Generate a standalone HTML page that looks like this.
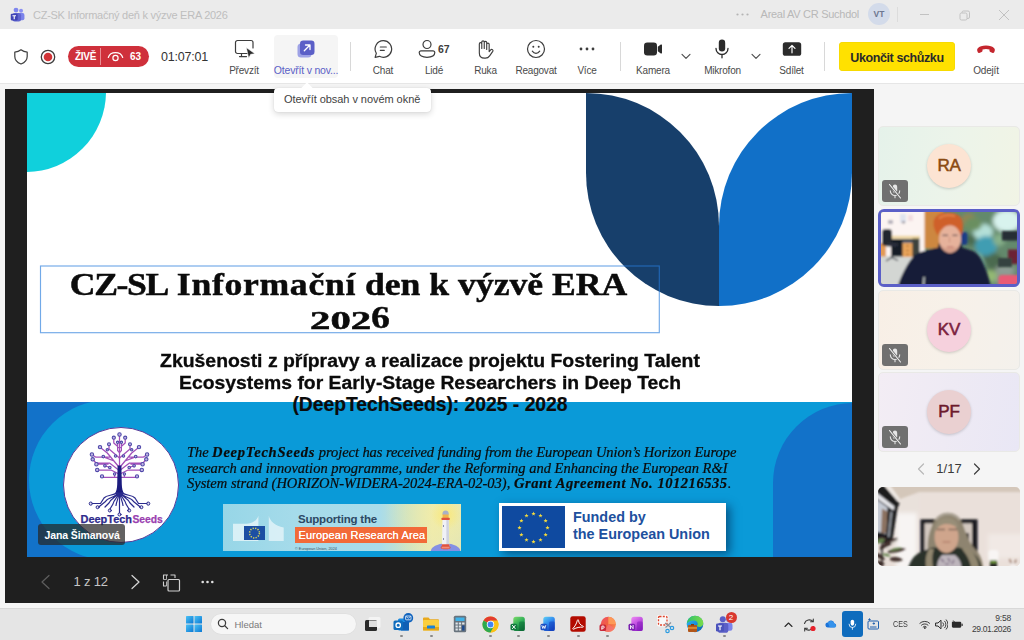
<!DOCTYPE html>
<html lang="cs">
<head>
<meta charset="utf-8">
<title>CZ-SK Informačný deň k výzve ERA 2026</title>
<style>
*{box-sizing:border-box;margin:0;padding:0}
html,body{width:1024px;height:640px;overflow:hidden;background:#f5f5f5;font-family:"Liberation Sans",sans-serif;}
.abs{position:absolute}
#root{position:absolute;left:0;top:0;width:1024px;height:640px;overflow:hidden;background:#f5f5f5}
/* title bar */
#titlebar{left:0;top:0;width:1024px;height:29px;background:#ebebeb}
#titlebar .ttl{left:33px;top:8px;font-size:11px;color:#bebebe;white-space:nowrap;letter-spacing:-0.26px;line-height:14px}
#titlebar .org{right:165px;top:7px;font-size:11px;color:#b8b8b8;white-space:nowrap;line-height:14px;letter-spacing:-0.28px}
#titlebar .dots{left:736px;top:13px;width:13px;height:3px}
#titlebar .av{left:868px;top:3px;width:22px;height:22px;border-radius:50%;background:#d3dbea;color:#6e7790;font-size:8.5px;font-weight:bold;text-align:center;line-height:22px}
/* toolbar */
#toolbar{left:0;top:29px;width:1024px;height:55px;background:#fff;border-bottom:1px solid #e6e6e6}
.tb{position:absolute;top:40px;transform:translateX(-50%);text-align:center;white-space:nowrap}
.tb svg{display:block;margin:0 auto}
.lbl{position:absolute;top:64.500px;transform:translateX(-50%);font-size:10px;color:#4a4a4a;white-space:nowrap;letter-spacing:-0.2px;line-height:12px}
.vdiv{position:absolute;top:42px;width:1px;height:29px;background:#d8d8d8}
/* stage */
#stage{left:5px;top:89px;width:869px;height:514px;background:#1f1f1f}
#slide{left:27px;top:93px;width:825px;height:464px;background:#fff;overflow:hidden}
/* right panel */
.tile{position:absolute;left:878px;width:142px;height:79.500px;border-radius:5px;border:1px solid #e9e9e6}
.avc{position:absolute;left:48px;top:16.500px;width:44px;height:44px;border-radius:50%;text-align:center;line-height:44px;font-size:17px;font-weight:normal;-webkit-text-stroke:.55px currentColor;box-shadow:0 1px 3px rgba(0,0,0,.18);letter-spacing:-0.2px}
.mute{position:absolute;left:3px;top:52.600px;width:25.500px;height:22px;border-radius:3px;background:#707070}
/* taskbar */
#taskbar{left:0;top:608px;width:1024px;height:32px;background:#e5e5e5;border-top:1px solid #d8d8d8}
</style>
</head>
<body>
<div id="root">

<!-- TITLE BAR -->
<div id="titlebar" class="abs">
  <svg class="abs" style="left:10px;top:6.500px" width="15" height="15.500" viewBox="0 0 16 16">
    <circle cx="11.800" cy="3.700" r="2.100" fill="#8a8ff2"/><circle cx="6.400" cy="3" r="2.600" fill="#7f86ee"/>
    <rect x="9" y="6.200" width="6.400" height="7.600" rx="2" fill="#7b83eb"/>
    <rect x="2.600" y="6.200" width="9.200" height="9" rx="2.400" fill="#5f64d0"/>
    <rect x="0.800" y="6.800" width="7.400" height="7.200" rx="1.100" fill="#3f43b4"/>
    <path d="M2.600 8.500h3.800v1H5.100v3.300H3.900V9.500H2.600z" fill="#fff"/>
  </svg>
  <div class="abs ttl">CZ-SK Informačný deň k výzve ERA 2026</div>
  <svg class="abs dots" viewBox="0 0 13 3"><circle cx="1.500" cy="1.500" r="1.100" fill="#b4b4b4"/><circle cx="6.500" cy="1.500" r="1.100" fill="#b4b4b4"/><circle cx="11.500" cy="1.500" r="1.100" fill="#b4b4b4"/></svg>
  <div class="abs org">Areal AV CR Suchdol</div>
  <div class="abs av">VT</div>
  <div class="abs" style="left:897px;top:7px;width:1px;height:15px;background:#dcdcdc"></div>
  <svg class="abs" style="left:915px;top:5px" width="100" height="20" viewBox="0 0 100 20" fill="none" stroke="#c2c2c2" stroke-width="1">
    <path d="M5 9.5h9"/>
    <rect x="45" y="8" width="7" height="7" rx="1.5"/><path d="M47 8V7.5a1.5 1.5 0 0 1 1.5-1.500H53a1.500 1.500 0 0 1 1.500 1.500V12a1.500 1.500 0 0 1-1.500 1.500H52"/>
    <path d="M84 5l10 10M94 5L84 15"/>
  </svg>
</div>

<!-- TOOLBAR -->
<div id="toolbar" class="abs"></div>
<div id="tbitems">
  <!-- shield -->
  <svg class="abs" style="left:12px;top:48px" width="18" height="18" viewBox="0 0 18 18" fill="none" stroke="#3d3d3d" stroke-width="1.2" stroke-linejoin="round"><path d="M9 1.800c1.900 1.500 3.900 2.200 6.200 2.300v4.300c0 3.600-2.300 6-6.200 7.600-3.900-1.600-6.200-4-6.200-7.600V4.100C5.100 4 7.100 3.300 9 1.800z"/></svg>
  <!-- record -->
  <svg class="abs" style="left:39px;top:48px" width="18" height="18" viewBox="0 0 18 18"><circle cx="9" cy="9" r="6.700" fill="none" stroke="#3d3d3d" stroke-width="1.300"/><circle cx="9" cy="9" r="4.300" fill="#d13438"/></svg>
  <!-- live badge -->
  <div class="abs" style="left:68px;top:46px;width:81px;height:21px;border-radius:10.500px;background:#cf303b"></div>
  <div class="abs" style="left:75px;top:51px;font-size:10px;font-weight:bold;color:#fff;letter-spacing:-0.300px;line-height:12px">ŽIVĚ</div>
  <div class="abs" style="left:100px;top:48px;width:1px;height:17px;background:#e98d93"></div>
  <svg class="abs" style="left:107px;top:50px" width="17" height="13" viewBox="0 0 17 13" fill="none" stroke="#fff" stroke-width="1.200" stroke-linecap="round"><path d="M1.300 7.500C2.300 4.300 5 2.600 8.500 2.600s6.200 1.700 7.200 4.900"/><circle cx="8.500" cy="8" r="2.600"/></svg>
  <div class="abs" style="left:130px;top:51px;font-size:10px;font-weight:bold;color:#fff;line-height:12px">63</div>
  <div class="abs" style="left:161px;top:50px;font-size:12.500px;color:#333;line-height:15px;letter-spacing:-0.200px">01:07:01</div>

  <!-- Prevzit -->
  <svg class="abs" style="left:234px;top:39px" width="22" height="20" viewBox="0 0 22 20" fill="none" stroke="#3d3d3d" stroke-width="1.200"><path d="M14 14.500H3.500a2 2 0 0 1-2-2v-9a2 2 0 0 1 2-2h13.500a2 2 0 0 1 2 2v5.500" stroke-linecap="round"/><path d="M7.500 14.500v3M5.500 17.600h7" stroke-linecap="round"/><path d="M12.300 8.600l8.700 6.200-4.300.5-2 3.900z" fill="#2b2b2b" stroke="#fff" stroke-width=".6"/></svg>
  <div class="lbl" style="left:244px">Převzít</div>

  <!-- Otevrit -->
  <div class="abs" style="left:274px;top:35px;width:64px;height:43px;border-radius:4px;background:#f5f5f5"></div>
  <svg class="abs" style="left:296px;top:39px" width="20" height="20" viewBox="0 0 20 20"><rect x="1.500" y="4.500" width="14" height="14" rx="3.500" fill="#9ea2e6"/><rect x="4" y="1.500" width="14.500" height="14.500" rx="3.200" fill="#5b5fc7"/><path d="M8.300 11.700l5.400-5.400M9.500 6h4.500v4.500" fill="none" stroke="#fff" stroke-width="1.300" stroke-linecap="round" stroke-linejoin="round"/></svg>
  <div class="lbl" style="left:306px;top:64px;color:#5b5fc7;font-size:10.500px">Otevřít v nov...</div>
  <div class="vdiv" style="left:350px"></div>

  <!-- Chat -->
  <svg class="abs" style="left:373px;top:39px" width="20" height="20" viewBox="0 0 20 20" fill="none" stroke="#3d3d3d" stroke-width="1.200" stroke-linecap="round" stroke-linejoin="round"><path d="M10.300 1.700a8.300 8.300 0 1 1-3.900 15.600l-4.300 1.100 1.200-4.100A8.300 8.300 0 0 1 10.300 1.700z"/><path d="M7.300 8h6M7.300 11.300h4"/></svg>
  <div class="lbl" style="left:383px">Chat</div>

  <!-- Lide -->
  <svg class="abs" style="left:418px;top:39px" width="18" height="20" viewBox="0 0 18 20" fill="none" stroke="#3d3d3d" stroke-width="1.200"><circle cx="9" cy="5.500" r="4"/><path d="M3 11.800h12a1.800 1.800 0 0 1 1.800 1.800c0 3-3 4.700-7.800 4.700s-7.800-1.700-7.800-4.700A1.800 1.800 0 0 1 3 11.800z"/></svg>
  <div class="abs" style="left:438px;top:43px;font-size:10.500px;font-weight:bold;color:#3d3d3d;line-height:12px">67</div>
  <div class="lbl" style="left:434px">Lidé</div>

  <!-- Ruka -->
  <svg class="abs" style="left:476px;top:39px" width="18" height="20.800" viewBox="0 0 19 22" fill="none" stroke="#3d3d3d" stroke-width="1.200" stroke-linecap="round" stroke-linejoin="round"><path d="M3.500 12V5.200a1.300 1.300 0 0 1 2.600 0V10M6.100 10V3.300a1.300 1.300 0 0 1 2.600 0V10M8.700 10V3.800a1.300 1.300 0 0 1 2.600 0V10.500M11.300 11V5.600a1.300 1.300 0 0 1 2.600 0v7.700l1.600-1.900a1.400 1.400 0 0 1 2.200 1.700l-3.300 4.800c-1 1.500-2.400 2.400-4.500 2.400H9c-3.300 0-5.500-2.300-5.500-5.500V12"/></svg>
  <div class="lbl" style="left:485.500px">Ruka</div>

  <!-- Reagovat -->
  <svg class="abs" style="left:526px;top:39px" width="20" height="20" viewBox="0 0 20 20" fill="none" stroke="#3d3d3d" stroke-width="1.200" stroke-linecap="round"><circle cx="10" cy="10" r="8.500"/><path d="M6.300 12.200c1 1.500 2.300 2.200 3.700 2.200s2.700-.7 3.700-2.200"/><circle cx="7.300" cy="7.700" r="1" fill="#3d3d3d" stroke="none"/><circle cx="12.700" cy="7.700" r="1" fill="#3d3d3d" stroke="none"/></svg>
  <div class="lbl" style="left:536px">Reagovat</div>

  <!-- Vice -->
  <svg class="abs" style="left:578px;top:46px" width="18" height="6" viewBox="0 0 18 6"><circle cx="3" cy="3" r="1.400" fill="#3d3d3d"/><circle cx="9" cy="3" r="1.400" fill="#3d3d3d"/><circle cx="15" cy="3" r="1.400" fill="#3d3d3d"/></svg>
  <div class="lbl" style="left:587px">Více</div>
  <div class="vdiv" style="left:620px"></div>

  <!-- Kamera -->
  <svg class="abs" style="left:643px;top:41px" width="20" height="16" viewBox="0 0 20 16"><rect x="1" y="1.500" width="13" height="13" rx="3.300" fill="#2b2b2b"/><path d="M14.800 5.800l3-2.200a.8.800 0 0 1 1.200.7v7.400a.8.800 0 0 1-1.200.7l-3-2.200z" fill="#2b2b2b"/></svg>
  <div class="lbl" style="left:653px">Kamera</div>
  <svg class="abs" style="left:681px;top:53px" width="10" height="7" viewBox="0 0 10 7" fill="none" stroke="#4a4a4a" stroke-width="1.100" stroke-linecap="round" stroke-linejoin="round"><path d="M1 1.300l4 4 4-4"/></svg>

  <!-- Mikrofon -->
  <svg class="abs" style="left:714px;top:38px" width="16" height="22" viewBox="0 0 16 22"><rect x="4.800" y="1.500" width="6.400" height="12" rx="3.200" fill="#2b2b2b"/><path d="M2 10.500a6 6 0 0 0 12 0M8 16.500v3.300" fill="none" stroke="#2b2b2b" stroke-width="1.300" stroke-linecap="round"/></svg>
  <div class="lbl" style="left:722.500px">Mikrofon</div>
  <svg class="abs" style="left:750.500px;top:53px" width="10" height="7" viewBox="0 0 10 7" fill="none" stroke="#4a4a4a" stroke-width="1.100" stroke-linecap="round" stroke-linejoin="round"><path d="M1 1.300l4 4 4-4"/></svg>

  <!-- Sdilet -->
  <svg class="abs" style="left:782px;top:41px" width="20" height="16" viewBox="0 0 20 16"><rect x="0.800" y="1.200" width="18.400" height="13.600" rx="2.600" fill="#2b2b2b"/><path d="M10 11.800V4.600M7 7.400l3-3 3 3" fill="none" stroke="#fff" stroke-width="1.200" stroke-linecap="round" stroke-linejoin="round"/></svg>
  <div class="lbl" style="left:791.500px">Sdílet</div>
  <div class="vdiv" style="left:824px"></div>

  <!-- End meeting -->
  <div class="abs" style="left:839px;top:42px;width:116px;height:28.500px;border-radius:4px;background:#ffe100;box-shadow:0 0 0 .5px #f0d400 inset"></div>
  <div class="abs" id="endtxt" style="left:839px;top:50.500px;width:116px;text-align:center;font-size:12.500px;font-weight:bold;color:#2a2a2a;line-height:15px;letter-spacing:-0.400px">Ukončit schůzku</div>

  <!-- Leave -->
  <svg class="abs" style="left:976px;top:44px" width="20" height="11" viewBox="0 0 20 11"><path d="M10 1.500c-3.800 0-6.700 1.100-8.200 2.700-.8.900-.8 2.300-.3 3.400l.3.700c.3.600.9.800 1.500.6l2.300-.8c.6-.2.900-.7.900-1.300V5.600c1.100-.4 2.300-.6 3.500-.6s2.400.2 3.500.6v1.200c0 .6.300 1.100.9 1.300l2.300.8c.6.200 1.200 0 1.500-.6l.3-.7c.5-1.100.5-2.500-.3-3.400C16.700 2.600 13.800 1.500 10 1.500z" fill="#c4262e"/></svg>
  <div class="lbl" style="left:986px">Odejít</div>

  <!-- tooltip -->
  <div class="abs" style="left:274px;top:87.500px;width:156.500px;height:24.500px;border-radius:4px;background:#fff;box-shadow:0 2px 6px rgba(0,0,0,.16),0 0 1px rgba(0,0,0,.18);z-index:20"></div>
  <div class="abs" style="left:303px;top:84px;width:8px;height:8px;background:#fff;transform:rotate(45deg);z-index:21"></div>
  <div class="abs" id="tiptxt" style="left:284px;top:93px;font-size:11px;color:#424242;line-height:13px;z-index:22;white-space:nowrap;letter-spacing:-0.050px">Otevřít obsah v novém okně</div>
</div>

<!-- STAGE -->
<div id="stage" class="abs"></div>
<div id="slide" class="abs">
  <!-- top-left cyan circle -->
  <div class="abs" style="left:-81px;top:-81px;width:160px;height:160px;border-radius:50%;background:#10d0dc"></div>
  <!-- leaves -->
  <svg class="abs" style="left:559px;top:0" width="266" height="214" viewBox="0 0 266 214">
    <path d="M0 0A133 133 0 0 1 133 133V213A133 133 0 0 1 0 80Z" fill="#173f6b"/>
    <path d="M266 0A133 133 0 0 0 133 133V213A133 133 0 0 0 266 80Z" fill="#1170c8"/>
  </svg>
  <!-- title -->
  <svg class="abs" style="left:0;top:160px" width="700" height="100" viewBox="0 0 700 100"><rect x="13.500" y="13" width="618.800" height="66.700" fill="none" stroke="rgba(40,125,220,.66)" stroke-width="1.150"/></svg>
  <div class="abs" id="t1" style="left:11.500px;top:174px;width:619px;text-align:center;font-family:'Liberation Serif',serif;font-weight:bold;font-size:31px;line-height:36px;color:#0b0b0b;-webkit-text-stroke:.45px #0b0b0b;white-space:nowrap;transform:scaleX(1.150);transform-origin:309px 0"><span style="letter-spacing:-1.200px">CZ-SL</span> <span style="letter-spacing:.6px">Informační</span> den k výzvě ERA</div>
  <div class="abs" id="t2a" style="left:283px;top:213px;font-family:'Liberation Serif',serif;font-weight:bold;font-size:25px;line-height:30px;color:#0b0b0b;-webkit-text-stroke:.5px #0b0b0b;transform:scaleX(1.630);transform-origin:0 0;white-space:nowrap">202</div>
  <div class="abs" id="t2b" style="left:344px;top:206.500px;font-family:'Liberation Serif',serif;font-weight:bold;font-size:31px;line-height:36px;color:#0b0b0b;-webkit-text-stroke:.4px #0b0b0b;transform:scaleX(1.220);transform-origin:0 0;white-space:nowrap">6</div>
  <!-- subtitle -->
  <div class="abs" id="s1" style="-webkit-text-stroke:.3px #0b0b0b;left:0;top:257px;width:806px;text-align:center;font-weight:bold;font-size:18px;line-height:22.300px;color:#0b0b0b;white-space:nowrap;transform:scaleX(1.078);transform-origin:403px 0">Zkušenosti z přípravy a realizace projektu Fostering Talent</div>
  <div class="abs" id="s2" style="-webkit-text-stroke:.3px #0b0b0b;left:0;top:279.300px;width:806px;text-align:center;font-weight:bold;font-size:18px;line-height:22.300px;color:#0b0b0b;white-space:nowrap;transform:scaleX(1.075);transform-origin:403px 0">Ecosystems for Early-Stage Researchers in Deep Tech</div>
  <!-- blue band -->
  <div class="abs" id="band" style="left:0;top:309px;width:825px;height:155px;background:#1272c9;overflow:hidden">
    <div class="abs" style="left:2px;top:-2px;width:900px;height:160px;border-radius:80px;background:#0a9ad8"></div>
    <div class="abs" style="left:746px;top:1px;width:160px;height:200px;border-top-left-radius:80px;background:#1272c9"></div>
  </div>
  <div class="abs" id="s3" style="-webkit-text-stroke:.2px #0b0b0b;left:0;top:301px;width:806px;text-align:center;font-weight:bold;font-size:19.300px;line-height:22.300px;color:#0b0b0b;white-space:nowrap">(DeepTechSeeds): 2025 - 2028</div>
  <!-- logo -->
  <div class="abs" style="left:35.500px;top:334px;width:116px;height:116px;border-radius:50%;background:#fff;border:1px solid #5a3d9a"></div>
  <svg class="abs" id="tree" style="left:35.500px;top:334px" width="118" height="118" viewBox="0 0 118 118" fill="none" stroke-linecap="round" stroke-linejoin="round">
    <g stroke="#a24fba" stroke-width="1.250">
      <path d="M56.500 40V9"/>
      <path d="M56.500 21L50.800 16V12.300M56.500 25.500L54.600 23.500V16.800M56.500 31L46 22V18.800M55.500 39.500L44.300 26 38 21M51 34L40.500 29.800M46.500 30H32.500L29.500 28M55 42.500L46.500 36H33L30.300 33M45 37.200H35M55 46.500L48 43H35.800M47 40.500L42 38.800M55 50.300H40.500M51.600 47.200V50"/>
      <g transform="matrix(-1 0 0 1 113 0)"><path d="M56.500 21L50.800 16V12.300M56.500 25.500L54.600 23.500V16.800M56.500 31L46 22V18.800M55.500 39.500L44.300 26 38 21M51 34L40.500 29.800M46.500 30H32.500L29.500 28M55 42.500L46.500 36H33L30.300 33M45 37.200H35M55 46.500L48 43H35.800M47 40.500L42 38.800M55 50.300H40.500M51.600 47.200V50"/></g>
    </g>
    <g fill="#bfb4e2" stroke="#4d47a8" stroke-width="1.050">
      <circle cx="56.500" cy="7.500" r="1.700"/>
      <circle cx="50.800" cy="10.700" r="1.600"/><circle cx="54.600" cy="15.300" r="1.200"/><circle cx="46" cy="17.200" r="1.500"/><circle cx="37" cy="20.100" r="1.700"/><circle cx="44.300" cy="22.800" r="1.200"/><circle cx="28.900" cy="27.500" r="1.700"/><circle cx="40.300" cy="29.600" r="1.300"/><circle cx="52.500" cy="29" r="1.200"/><circle cx="29.700" cy="32.300" r="1.700"/><circle cx="33.400" cy="37.200" r="1.700"/><circle cx="41.900" cy="38.800" r="1.300"/><circle cx="46.800" cy="40.500" r="1.300"/><circle cx="34.200" cy="42.900" r="1.700"/><circle cx="51.600" cy="47" r="1.200"/><circle cx="39" cy="49.400" r="1.600"/>
      <g transform="matrix(-1 0 0 1 113 0)"><circle cx="50.800" cy="10.700" r="1.600"/><circle cx="54.600" cy="15.300" r="1.200"/><circle cx="46" cy="17.200" r="1.500"/><circle cx="37" cy="20.100" r="1.700"/><circle cx="44.300" cy="22.800" r="1.200"/><circle cx="28.900" cy="27.500" r="1.700"/><circle cx="40.300" cy="29.600" r="1.300"/><circle cx="52.500" cy="29" r="1.200"/><circle cx="29.700" cy="32.300" r="1.700"/><circle cx="33.400" cy="37.200" r="1.700"/><circle cx="41.900" cy="38.800" r="1.300"/><circle cx="46.800" cy="40.500" r="1.300"/><circle cx="34.200" cy="42.900" r="1.700"/><circle cx="51.600" cy="47" r="1.200"/><circle cx="39" cy="49.400" r="1.600"/></g>
    </g>
    <path d="M54.600 38.500h3.800l.4 19c.1 4 .9 6.500 2.200 9.500H52c1.300-3 2.100-5.500 2.200-9.500z" fill="#1b1b7e" stroke="none"/>
    <g stroke="#2a2a8c" stroke-width="1.200">
      <path d="M56.500 66V86"/>
      <path d="M55.300 66C54.500 72 51 72 50 77L47 82M54.500 66C52.500 71 45 70 42.500 74.500L36 79.800M54 65.500C50 69 44 67.500 41 71L37.500 76.500H29.500M55 66C53 71 48 71 46 76L42 80M55.800 66.500C55.500 72 53.500 74 53 78.500"/>
      <g transform="matrix(-1 0 0 1 113 0)"><path d="M55.300 66C54.500 72 51 72 50 77L47 82M54.500 66C52.500 71 45 70 42.500 74.500L36 79.800M54 65.500C50 69 44 67.500 41 71L37.500 76.500H29.500M55 66C53 71 48 71 46 76L42 80M55.800 66.500C55.500 72 53.500 74 53 78.500"/></g>
    </g>
    <g fill="#e4e0f4" stroke="#2a2a8c" stroke-width="1">
      <circle cx="56.500" cy="87.500" r="1.500"/>
      <circle cx="46.800" cy="83.500" r="1.500"/><circle cx="34.600" cy="80.200" r="1.500"/><circle cx="27.800" cy="76.600" r="1.600"/>
      <g transform="matrix(-1 0 0 1 113 0)"><circle cx="46.800" cy="83.500" r="1.500"/><circle cx="34.600" cy="80.200" r="1.500"/><circle cx="27.800" cy="76.600" r="1.600"/></g>
    </g>
    <text x="17.500" y="96.200" font-family="Liberation Sans, sans-serif" font-weight="bold" font-size="10.500" fill="#2e2a8c" stroke="#2e2a8c" stroke-width=".25" textLength="51.500" lengthAdjust="spacingAndGlyphs">DeepTech</text>
    <text x="69.500" y="96.200" font-family="Liberation Sans, sans-serif" font-weight="bold" font-size="10.500" fill="#9a3fb0" stroke="#9a3fb0" stroke-width=".25" textLength="30.300" lengthAdjust="spacingAndGlyphs">Seeds</text>
  </svg>
  <!-- italic para -->
  <div class="abs" id="p1" style="left:160px;top:352px;font-family:'Liberation Serif',serif;font-style:italic;font-size:13.800px;line-height:15.500px;color:#0b0b0b;-webkit-text-stroke:.2px #0b0b0b;white-space:nowrap;transform:scaleX(1.0507);transform-origin:0 0;letter-spacing:-.06px">The <b style="letter-spacing:.75px">DeepTechSeeds</b> project has received funding from the European Union’s Horizon Europe</div>
  <div class="abs" id="p2" style="left:160px;top:367.500px;font-family:'Liberation Serif',serif;font-style:italic;font-size:13.800px;line-height:15.500px;color:#0b0b0b;-webkit-text-stroke:.2px #0b0b0b;white-space:nowrap;transform:scaleX(1.0507);transform-origin:0 0;">research and innovation programme, under the Reforming and Enhancing the European R&amp;I</div>
  <div class="abs" id="p3" style="left:160px;top:383px;font-family:'Liberation Serif',serif;font-style:italic;font-size:13.800px;line-height:15.500px;color:#0b0b0b;-webkit-text-stroke:.2px #0b0b0b;white-space:nowrap;transform:scaleX(1.0507);transform-origin:0 0;">System strand (HORIZON-WIDERA-2024-ERA-02-03), <b style="letter-spacing:.53px">Grant Agreement No. 101216535</b>.</div>
  <!-- ERA banner -->
  <div class="abs" id="era" style="left:196px;top:410.500px;width:238px;height:47px;overflow:hidden;background:linear-gradient(90deg,#97d6e7 0%,#a5dbea 30%,#a9dcea 66%,#cfe3c4 78%,#ece9b4 88%,#dfe4bc 100%)">
    <div class="abs" style="left:162px;top:-44px;width:120px;height:110px;border-radius:50%;background:radial-gradient(closest-side,rgba(246,238,160,.7),rgba(240,236,165,.35) 55%,rgba(240,236,165,0))"></div>
    <div class="abs" style="left:208px;top:-4px;width:30px;height:30px;border-radius:50%;background:radial-gradient(closest-side,rgba(250,232,120,.9),rgba(250,232,120,0))"></div>
    <!-- building -->
    <svg class="abs" style="left:0;top:0" width="70" height="47" viewBox="0 0 70 47"><path d="M10 37V19.700H24C30 19.500 34 16 35.400 11.700V37z" fill="#fff" opacity=".62"/><path d="M45.800 11.700C47 17 52 22 60.700 23.500V37H45.800z" fill="#fff" opacity=".58"/></svg>
    <!-- flag -->
    <div class="abs" style="left:21px;top:22.200px;width:21.100px;height:14px;background:#1c4fa3"></div>
    <svg class="abs" style="left:21px;top:22.200px" width="21.100" height="14" viewBox="0 0 21.100 14"><circle cx="10.500" cy="7" r="4.900" fill="none" stroke="#cfd060" stroke-width="1.500" stroke-dasharray="1.300 1.266"/></svg>
    <div class="abs" id="sup" style="left:75px;top:9.300px;font-size:11.500px;font-weight:bold;color:#2d4964;line-height:13px;white-space:nowrap;letter-spacing:-.2px">Supporting the</div>
    <div class="abs" style="left:72px;top:23.500px;width:131.800px;height:16.300px;background:#f26a38"></div>
    <div class="abs" id="eratxt" style="left:75.500px;top:25.600px;font-size:11px;color:#fff;line-height:12px;white-space:nowrap;letter-spacing:.15px;text-shadow:0 0 .4px #fff">European Research Area</div>
    <div class="abs" style="left:72px;top:43.500px;font-size:3.800px;color:#3a5060;line-height:4px;white-space:nowrap">© European Union, 2024</div>
    <!-- lighthouse -->
    <svg class="abs" style="left:205px;top:3px" width="34" height="45" viewBox="0 0 34 45"><ellipse cx="17.600" cy="44.500" rx="14.800" ry="8" fill="#8490e4"/><ellipse cx="17.600" cy="40.500" rx="5" ry="1.800" fill="#d94a3a"/><path d="M14 39.500L14.500 12h6.200L21.200 39.500z" fill="#f0f1f6"/><path d="M18.400 12h2.300l.5 27.500h-2.800z" fill="#cfd2e0"/><rect x="13.800" y="37.300" width="7.600" height="2.800" rx=".6" fill="#e0523e"/><rect x="13.600" y="39.800" width="8" height="1.600" rx=".6" fill="#f08a78"/><rect x="14.600" y="7" width="6" height="4.500" fill="#f2b24a"/><path d="M14.400 7.500a3.200 4 0 0 1 6.400 0z" fill="#a9b0c6"/><rect x="13.400" y="10.800" width="8.400" height="2.200" rx=".8" fill="#e0523e"/><rect x="15" y="18" width="1" height="2" fill="#8a90b0"/><rect x="15" y="31" width="1" height="2" fill="#8a90b0"/></svg>
  </div>
  <!-- funded -->
  <div class="abs" id="funded" style="left:472px;top:410px;width:227px;height:47.500px;background:#fff;box-shadow:4px 3px 9px rgba(0,30,70,.55)">
    <div class="abs" style="left:3px;top:3.300px;width:63px;height:42px;background:#0f4aa0"></div>
    <svg class="abs" style="left:3px;top:3.800px" width="63" height="42" viewBox="0 0 63 42"><g fill="#f7dc3c"><polygon points="31.50,4.55 32.03,6.07 33.64,6.10 32.36,7.08 32.82,8.62 31.50,7.70 30.18,8.62 30.64,7.08 29.36,6.10 30.97,6.07"/><polygon points="38.50,6.43 39.03,7.95 40.64,7.98 39.36,8.95 39.82,10.50 38.50,9.58 37.18,10.50 37.64,8.95 36.36,7.98 37.97,7.95"/><polygon points="43.62,11.55 44.15,13.07 45.76,13.10 44.48,14.08 44.95,15.62 43.62,14.70 42.30,15.62 42.77,14.08 41.48,13.10 43.10,13.07"/><polygon points="45.50,18.55 46.03,20.07 47.64,20.10 46.36,21.08 46.82,22.62 45.50,21.70 44.18,22.62 44.64,21.08 43.36,20.10 44.97,20.07"/><polygon points="43.62,25.55 44.15,27.07 45.76,27.10 44.48,28.08 44.95,29.62 43.62,28.70 42.30,29.62 42.77,28.08 41.48,27.10 43.10,27.07"/><polygon points="38.50,30.67 39.03,32.20 40.64,32.23 39.36,33.20 39.82,34.74 38.50,33.82 37.18,34.74 37.64,33.20 36.36,32.23 37.97,32.20"/><polygon points="31.50,32.55 32.03,34.07 33.64,34.10 32.36,35.08 32.82,36.62 31.50,35.70 30.18,36.62 30.64,35.08 29.36,34.10 30.97,34.07"/><polygon points="24.50,30.67 25.03,32.20 26.64,32.23 25.36,33.20 25.82,34.74 24.50,33.82 23.18,34.74 23.64,33.20 22.36,32.23 23.97,32.20"/><polygon points="19.38,25.55 19.90,27.07 21.52,27.10 20.23,28.08 20.70,29.62 19.38,28.70 18.05,29.62 18.52,28.08 17.24,27.10 18.85,27.07"/><polygon points="17.50,18.55 18.03,20.07 19.64,20.10 18.36,21.08 18.82,22.62 17.50,21.70 16.18,22.62 16.64,21.08 15.36,20.10 16.97,20.07"/><polygon points="19.38,11.55 19.90,13.07 21.52,13.10 20.23,14.08 20.70,15.62 19.38,14.70 18.05,15.62 18.52,14.08 17.24,13.10 18.85,13.07"/><polygon points="24.50,6.43 25.03,7.95 26.64,7.98 25.36,8.95 25.82,10.50 24.50,9.58 23.18,10.50 23.64,8.95 22.36,7.98 23.97,7.95"/></g></svg>
    <div class="abs" id="f1" style="left:74px;top:5.500px;font-size:14.400px;font-weight:bold;color:#20509e;line-height:17px;white-space:nowrap">Funded by</div>
    <div class="abs" id="f2" style="left:74px;top:23.100px;font-size:14.400px;font-weight:bold;color:#20509e;line-height:17px;white-space:nowrap">the European Union</div>
  </div>
  <!-- name label -->
  <div class="abs" style="left:11px;top:431px;width:87px;height:21px;border-radius:3px;background:rgba(37,37,37,.72)"></div>
  <div class="abs" id="nm" style="left:17.500px;top:436px;font-size:10.500px;font-weight:bold;color:#fff;line-height:12px;white-space:nowrap;letter-spacing:-.1px">Jana Šimanová</div>
</div>

<!-- slide nav -->
<div id="nav">
  <svg class="abs" style="left:38px;top:573px" width="14" height="18" viewBox="0 0 14 18" fill="none" stroke="#5e5e5e" stroke-width="1.200" stroke-linecap="round" stroke-linejoin="round"><path d="M11 2.500L4 9l7 6.500"/></svg>
  <div class="abs" id="pgn" style="left:73.500px;top:574px;font-size:13px;color:#c6c6c6;line-height:16px;white-space:nowrap;letter-spacing:-.2px">1 z 12</div>
  <svg class="abs" style="left:128px;top:573px" width="14" height="18" viewBox="0 0 14 18" fill="none" stroke="#d6d6d6" stroke-width="1.200" stroke-linecap="round" stroke-linejoin="round"><path d="M4 2.500L11 9l-7 6.500"/></svg>
  <svg class="abs" style="left:162px;top:573.500px" width="19" height="18" viewBox="0 0 19 18" fill="none" stroke="#d0d0d0" stroke-width="1.200" stroke-linejoin="round"><path d="M6 1h-4.500v4.500M1.500 7.500V12h3M8.500 1H13v3" stroke-width="1.100"/><path d="M4.500 1v4.500H1.500M4.500 7.500V12" stroke-width="1" opacity=".8"/><rect x="6" y="5.500" width="11.500" height="11.500" rx="1"/></svg>
  <svg class="abs" style="left:200.500px;top:580px" width="13" height="4" viewBox="0 0 13 4"><circle cx="1.700" cy="2" r="1.300" fill="#e0e0e0"/><circle cx="6.500" cy="2" r="1.300" fill="#e0e0e0"/><circle cx="11.300" cy="2" r="1.300" fill="#e0e0e0"/></svg>
</div>

<!-- RIGHT PANEL -->
<div id="panel">
  <div class="tile" style="top:126px;background:linear-gradient(100deg,#e5f2ea 0%,#ecf4ea 50%,#f1f4e5 100%)">
    <div class="avc" style="background:#fce4d3;color:#8a4a12">RA</div>
    <div class="mute"><svg width="26" height="22" viewBox="0 0 26 22" style="position:absolute;left:0;top:0"><rect x="10.800" y="4.500" width="4.400" height="8.500" rx="2.200" fill="#e6e6e6"/><path d="M8.300 10.800a4.700 4.700 0 0 0 9.400 0M13 15.500v2.300" fill="none" stroke="#e6e6e6" stroke-width="1.100" stroke-linecap="round"/><path d="M7.500 4.500l11 13.500" stroke="#707070" stroke-width="2.600"/><path d="M7.500 4.500l11 13.500" stroke="#f2f2f2" stroke-width="1.100" stroke-linecap="round"/></svg></div>
  </div>
  <!-- active speaker video -->
  <div class="abs" id="vid1" style="left:878px;top:209px;width:142px;height:77.500px;border-radius:6px;background:#5b5fc7;overflow:hidden">
    <svg class="abs" style="left:3px;top:3px;border-radius:2px" width="136" height="71.500" viewBox="0 0 136 71.500" id="v1svg">
      <defs><filter id="b1" x="-20%" y="-20%" width="140%" height="140%"><feGaussianBlur stdDeviation=".9"/></filter><filter id="b2" x="-10%" y="-10%" width="120%" height="120%"><feGaussianBlur stdDeviation="2.200"/></filter></defs>
      <rect x="-4" y="-4" width="144" height="80" fill="#64896c"/>
      <g filter="url(#b2)">
        <rect x="60" y="-6" width="86" height="86" fill="#64896c"/>
        <ellipse cx="88" cy="9" rx="8" ry="7" fill="#9a8450"/>
        <ellipse cx="100" cy="45" rx="6" ry="7" fill="#3f5a45"/>
        <ellipse cx="90" cy="28" rx="5" ry="6" fill="#4a6a50"/>
        <ellipse cx="122" cy="66" rx="12" ry="6" fill="#8a9a88"/>
        <ellipse cx="126" cy="9" rx="14" ry="11" fill="#d8f3ee"/>
        <ellipse cx="102" cy="20" rx="10" ry="8" fill="#b5e0d8"/>
        <ellipse cx="105" cy="34" rx="11" ry="10" fill="#3f9db2"/>
        <ellipse cx="92" cy="12" rx="9" ry="7" fill="#6a8f60"/>
        <ellipse cx="113" cy="50" rx="8" ry="9" fill="#4c6b4f"/>
        <ellipse cx="96" cy="50" rx="7" ry="9" fill="#7fb59c"/>
        <ellipse cx="118" cy="28" rx="6" ry="6" fill="#86b08a"/>
        <ellipse cx="110" cy="64" rx="6" ry="6" fill="#93b873"/>
        <ellipse cx="124" cy="58" rx="10" ry="5" fill="#8e9c94"/>
      </g>
      <g filter="url(#b1)">
        <rect x="-8" y="-8" width="52" height="54" fill="#fcf4f2"/>
        <rect x="7" y="8" width="5" height="4" fill="#b9b4bd"/><rect x="19" y="2" width="6" height="9" fill="#dfe3ee"/><rect x="21" y="9" width="3" height="2.500" fill="#a7a2a8"/><rect x="27" y="3" width="5" height="6" fill="#f1dde0"/>
        <rect x="-6" y="44" width="60" height="44" fill="#d3d6d3"/>
        <rect x="43.500" y="-8" width="19" height="44.500" fill="#cd8740"/>
        <rect x="11" y="27" width="27" height="17.500" fill="#151a27"/>
        <rect x="31.500" y="26" width="7" height="17" fill="#3c423c"/>
        <rect x="11" y="23.800" width="28" height="2.800" fill="#edd49c"/>
        <rect x="-6" y="31" width="11" height="13.500" fill="#e29a54"/>
        <rect x="21.500" y="30.500" width="10" height="14.500" fill="#e9a45c"/><rect x="21.500" y="29" width="10" height="2" fill="#5b6a7c"/>
        <rect x="25" y="33.500" width="3" height="1" fill="#a8662c"/><rect x="25" y="38" width="3" height="1" fill="#a8662c"/><rect x="25" y="42" width="3" height="1" fill="#a8662c"/>
        <rect x="1" y="17" width="10" height="17" rx="3.500" fill="#23262f"/>
        <rect x="5" y="31" width="12" height="3.500" rx="1.500" fill="#2b2f3a"/>
        <rect x="10" y="34" width="1.300" height="12" fill="#2b2f3a"/>
        <path d="M5 49l5.600-3.500L17 48.500" stroke="#3a3e48" stroke-width="1.300" fill="none"/>
        <rect x="121" y="19" width="16" height="9.500" fill="#262d34"/>
        <rect x="127" y="37.500" width="10" height="14.500" fill="#6c2234"/>
        <rect x="117" y="46" width="14" height="9" fill="#34423f"/>
        <rect x="80" y="20" width="6.500" height="13" rx="3" fill="#1b3e86"/>
        <path d="M117.500 84v-17.500a3.500 3.500 0 0 1 3.500-3.500h20v21z" fill="#e95a74"/>
        <!-- body -->
        <path d="M17.500 72C21 62 26 52 32 45c3-3.500 8-5.500 13-6.500l12-3 .8-4h22.500l1 4 9 3c6 2 9 6 12 13 3 7 5.500 14 7 20.500v12H17.500z" fill="#121d37"/>
        <path d="M42 80l1.100-15" stroke="#c9cfcd" stroke-width="1.500"/>
        <!-- face -->
        <path d="M55 16c0-9 5-14 13-14s14 5 14 13c0 4-1 7-2.500 9l-3-6H58l-1 6c-1.300-2-2-5-2-8z" fill="#cf6029"/>
        <ellipse cx="69" cy="27" rx="11" ry="13.800" fill="#e6b29b"/>
        <path d="M59.500 33c2.500 5.500 6.500 8 9.500 8s6.500-2.500 8.500-7c-2 1.500-5 2.500-9 2.500s-7-1.500-9-3.500z" fill="#d59d88"/>
        <path d="M61.500 23.300h5.500M71.500 23.300h5" stroke="#5a4a50" stroke-width="1.200"/>
        <path d="M68.500 25v5.500" stroke="#d39a86" stroke-width="1.400"/>
        <path d="M66 35h6.500" stroke="#b96d66" stroke-width="1.100"/>
        <!-- hair -->
        <path d="M56.500 23c-2.500-4-4.500-8-4-13C53 3.500 60 .2 68 .4c8 .2 13.500 4 13.500 10.200 0 3.500-1 6.500-2.500 8.500-1.500-3.500-4-5.500-8-6-5-.6-9 .6-10.800 3.500-1.200 2-2.200 4-3.700 6.400z" fill="#cf6029"/>
        <path d="M58 6.500c4-3.300 10-4.300 16-2.300" stroke="#e07f45" stroke-width="2.200" fill="none"/>
      </g>
    </svg>
  </div>
  <div class="tile" style="top:290px;background:linear-gradient(100deg,#f8efe6 0%,#f7f1e9 50%,#f4f1ec 100%)">
    <div class="avc" style="background:#f6d1dd;color:#7c1f40">KV</div>
    <div class="mute"><svg width="26" height="22" viewBox="0 0 26 22" style="position:absolute;left:0;top:0"><rect x="10.800" y="4.500" width="4.400" height="8.500" rx="2.200" fill="#e6e6e6"/><path d="M8.300 10.800a4.700 4.700 0 0 0 9.400 0M13 15.500v2.300" fill="none" stroke="#e6e6e6" stroke-width="1.100" stroke-linecap="round"/><path d="M7.500 4.500l11 13.500" stroke="#707070" stroke-width="2.600"/><path d="M7.500 4.500l11 13.500" stroke="#f2f2f2" stroke-width="1.100" stroke-linecap="round"/></svg></div>
  </div>
  <div class="tile" style="top:372px;background:linear-gradient(100deg,#f3edf4 0%,#eeeaf4 50%,#e9e7f5 100%)">
    <div class="avc" style="background:#ead0d1;color:#6c1a2c">PF</div>
    <div class="mute"><svg width="26" height="22" viewBox="0 0 26 22" style="position:absolute;left:0;top:0"><rect x="10.800" y="4.500" width="4.400" height="8.500" rx="2.200" fill="#e6e6e6"/><path d="M8.300 10.800a4.700 4.700 0 0 0 9.400 0M13 15.500v2.300" fill="none" stroke="#e6e6e6" stroke-width="1.100" stroke-linecap="round"/><path d="M7.500 4.500l11 13.500" stroke="#707070" stroke-width="2.600"/><path d="M7.500 4.500l11 13.500" stroke="#f2f2f2" stroke-width="1.100" stroke-linecap="round"/></svg></div>
  </div>
  <!-- pager -->
  <svg class="abs" style="left:916px;top:462px" width="10" height="14" viewBox="0 0 10 14" fill="none" stroke="#b8b8b8" stroke-width="1.200" stroke-linecap="round" stroke-linejoin="round"><path d="M7.500 2L2.500 7l5 5"/></svg>
  <div class="abs" id="pg" style="left:919px;top:461px;width:60px;text-align:center;font-size:13px;color:#3a3a3a;line-height:16px">1/17</div>
  <svg class="abs" style="left:972px;top:462px" width="10" height="14" viewBox="0 0 10 14" fill="none" stroke="#3d3d3d" stroke-width="1.200" stroke-linecap="round" stroke-linejoin="round"><path d="M2.500 2l5 5-5 5"/></svg>
  <!-- self video -->
  <div class="abs" id="vid2" style="left:878px;top:487px;width:142px;height:79px;border-radius:5px;overflow:hidden;background:#e9dfd9">
    <svg class="abs" style="left:0;top:0" width="142" height="79" viewBox="0 0 142 79" id="v2svg">
      <defs><filter id="c1" x="-20%" y="-20%" width="140%" height="140%"><feGaussianBlur stdDeviation=".85"/></filter><filter id="c2" x="-20%" y="-20%" width="140%" height="140%"><feGaussianBlur stdDeviation="2"/></filter></defs>
      <rect x="-5" y="-5" width="152" height="89" fill="#e8ded8"/>
      <g filter="url(#c2)">
        <rect x="40" y="5" width="112" height="84" fill="#eae0da"/>
        <rect x="18" y="25" width="21" height="64" fill="#f7f4f3"/>
        <rect x="20" y="8" width="22" height="18" fill="#e9e1db"/>
        <rect x="110" y="47" width="40" height="24" fill="#f1e9e5"/>
      </g>
      <g filter="url(#c1)">
        <path d="M4 -6H150V5H41L19.500 13z" fill="#d4c7ba"/>
        <path d="M3 -6L9 -6 22 12 19.500 14z" fill="#efe9e4"/>
        <!-- window -->
        <path d="M-6 -6H2L21.500 16.500 19.500 21 14 56H-6z" fill="#1a1a1f"/>
        <path d="M-6 2L16.500 19.500 15.500 23.500-6 8z" fill="#e6e6ea"/>
        <path d="M-6 9L9.500 20.500 8 47-6 48z" fill="#c6cbd5"/>
        <path d="M4 21.500L9.500 24.500 8 46 3 46.500z" fill="#8c7260"/>
        <path d="M12.600 24L14.300 25 11.500 50 9.800 50z" fill="#a3a8b0"/>
        <path d="M-6 43.500L10 47.500V50L-6 46.500z" fill="#1a1a1f"/>
        <!-- plant -->
        <path d="M-2 52c4-3 8-3 11 0-3 3-7 5-11 4zM2 60c6-6 13-9 18-9-3 5-10 9-18 12zM10 64c6-3 13-4 18-2-5 3-12 4-18 4zM-2 66c4 0 8 3 9 7-4 0-7-2-9-4zM12 71c5-2 10-1 13 2-4 2-9 2-13 0zM-2 74c3-1 7 0 9 3l-9 5z" fill="#43332f"/>
        <path d="M-1 53c3-2 6-2 8 0-2 2-5 4-8 3zM12 63c4-2 8-3 12-2-3 2-8 3-12 3zM5 67c3-1 6 0 8 2-3 1-6 0-8-1z" fill="#66834f"/>
        <path d="M13 55.500c3-1.500 6-3 8-3-2 2.500-5 4-8 4.500zM8 61c2-1 4-1 6 0-2 1-4 1.500-6 1z" fill="#d9d3cc"/>
        <path d="M4 56v26" stroke="#2a2222" stroke-width="1.500"/>
        <!-- frame -->
        <rect x="42.500" y="32.300" width="57" height="40" fill="#1b1b20"/>
        <rect x="46.500" y="36.300" width="47.500" height="40" fill="#d3c8c0"/>
        <rect x="86" y="46" width="5" height="16" fill="#3a3636"/>
        <!-- lamp -->
        <path d="M110.500 66a3 3 0 0 1 3-3h4a3 3 0 0 1 3 3v7.500h-10z" fill="#f8f5f4"/>
        <rect x="112" y="73.500" width="7" height="9" fill="#2a2a26"/><rect x="112.500" y="73.500" width="6" height="2.500" fill="#6f9a3a"/>
        <path d="M131.500 72l2 5M138 72.500l-1.500 5" stroke="#9a7a6a" stroke-width="1.500"/><rect x="132" y="76.500" width="6" height="6" fill="#f3eeec"/>
        <!-- hair -->
        <path d="M50 66c-1-8 0-18 3.500-26 3-9 8.500-14.300 16-14.300S82 30 85 38c3 8 6 17 12 24 4 4 7 9 8 17v6H46v-6c0-5 2-9 4-13z" fill="#8e846f"/>
        <path d="M58 33c3-4 7-6 12-6s9 2 12 6" stroke="#aaa294" stroke-width="2.500" fill="none"/>
        <!-- jacket -->
        <path d="M30.500 86v-6c2-7 6-12 12-15l12-4.500h27l12 5c5 2.500 8.500 8 10 14.500v6z" fill="#2a302b"/>
        <path d="M56 62c-2 6-2 12-1 18v6h-7v-6c-1-7 0-13 3-18zM84 62c4 5 8 11 9 18v6h8v-6c-1-8-5-14-11-19z" fill="#91876f"/>
        <path d="M59 86v-6c0-5 2-9 5-12h13c4 3 6 7 6.500 12v6z" fill="#bdb5bc"/>
        <path d="M63 72l3 3M70 71l2 4M76 73l-2 4M67 77h4" stroke="#6e5a78" stroke-width="1.200"/>
        <!-- face -->
        <ellipse cx="68.500" cy="50" rx="12" ry="16" fill="#cfa58c"/>
        <path d="M56.500 45c0-9 5-14.500 12-14.500s11 4 12.500 11c-4-3-8-4.500-12.500-4.500S60.500 39 56.500 45z" fill="#988e78"/>
        <path d="M58.500 42.500h8.500M70.500 42.500h8.500" stroke="#7d6658" stroke-width="1.300"/>
        <path d="M64.500 55h8" stroke="#a8705f" stroke-width="1"/>
      </g>
    </svg>
  </div>
</div>

<!-- TASKBAR -->
<div id="taskbar" class="abs"></div>
<div id="tbicons">
  <!-- windows logo -->
  <svg class="abs" style="left:185.500px;top:616px" width="16" height="16" viewBox="0 0 16 16"><defs><linearGradient id="wg" x1="0" y1="0" x2="1" y2="1"><stop offset="0" stop-color="#4cc2f5"/><stop offset="1" stop-color="#0a78d4"/></linearGradient></defs><rect x="0" y="0" width="7.500" height="7.500" rx=".6" fill="url(#wg)"/><rect x="8.500" y="0" width="7.500" height="7.500" rx=".6" fill="url(#wg)"/><rect x="0" y="8.500" width="7.500" height="7.500" rx=".6" fill="url(#wg)"/><rect x="8.500" y="8.500" width="7.500" height="7.500" rx=".6" fill="url(#wg)"/></svg>
  <!-- search -->
  <div class="abs" style="left:211px;top:614px;width:145px;height:20px;border-radius:10px;background:#f6f6f6;box-shadow:0 0 0 .5px #dcdcdc"></div>
  <svg class="abs" style="left:217px;top:618px" width="12" height="12" viewBox="0 0 12 12" fill="none" stroke="#3c3c3c" stroke-width="1.250" stroke-linecap="round"><circle cx="5" cy="5" r="3.600"/><path d="M7.800 7.800l2.800 2.800"/></svg>
  <div class="abs" id="hl" style="left:234.500px;top:618.500px;font-size:9.500px;color:#7a7a7a;line-height:11px">Hledat</div>
  <!-- task view -->
  <svg class="abs" style="left:364px;top:616px" width="17" height="16" viewBox="0 0 17 16"><rect x="4.500" y="1" width="12" height="11" rx="1.500" fill="#f4f4f4"/><rect x="1" y="4" width="12" height="11" rx="1.500" fill="#2a2a2a"/><rect x="5" y="4.500" width="8" height="6.500" fill="#e0e0e0"/></svg>
  <!-- outlook -->
  <svg class="abs" style="left:392px;top:613px" width="22" height="21" viewBox="0 0 22 21"><rect x="6" y="5.500" width="11" height="12" rx="1.500" fill="#1a8ae0"/><rect x="9" y="9" width="8" height="8.500" fill="#0f5fb5"/><rect x="1.500" y="7.500" width="9.500" height="9.500" rx="1.500" fill="#0f6cbd"/><circle cx="6.200" cy="12.200" r="2.200" fill="none" stroke="#fff" stroke-width="1.300"/><circle cx="16.300" cy="4.900" r="4.900" fill="#0f62bd"/><rect x="13.600" y="3" width="5.400" height="3.800" rx=".6" fill="none" stroke="#fff" stroke-width=".75"/><path d="M13.800 3.300L16.300 5.200l2.500-1.900" fill="none" stroke="#fff" stroke-width=".65"/></svg><div class="abs" style="left:399.5px;top:635px;width:3px;height:1.500px;border-radius:1px;background:#8a8a8a"></div>
  <!-- explorer -->
  <svg class="abs" style="left:422px;top:615px" width="18" height="18" viewBox="0 0 18 18"><path d="M1 3.500a1 1 0 0 1 1-1h4.500l1.500 1.700H16a1 1 0 0 1 1 1V6H1z" fill="#e9a91d"/><rect x="1" y="5" width="16" height="10.500" rx="1" fill="#fbcf3f"/><rect x="1" y="12" width="16" height="3.500" fill="#e5a718"/><rect x="5" y="10.500" width="8" height="3" rx=".6" fill="#1b82d6"/></svg><div class="abs" style="left:430.0px;top:635px;width:3px;height:1.500px;border-radius:1px;background:#8a8a8a"></div>
  <!-- calculator -->
  <svg class="abs" style="left:453px;top:615px" width="14" height="18" viewBox="0 0 14 18"><rect x=".8" y=".8" width="12.400" height="16.400" rx="1.500" fill="#68737d"/><rect x="2.500" y="2.500" width="9" height="3.500" fill="#3fb2e8"/><g fill="#dfe5ea"><rect x="2.500" y="7.500" width="2.300" height="2"/><rect x="5.800" y="7.500" width="2.300" height="2"/><rect x="9.100" y="7.500" width="2.400" height="2"/><rect x="2.500" y="10.500" width="2.300" height="2"/><rect x="5.800" y="10.500" width="2.300" height="2"/><rect x="2.500" y="13.500" width="2.300" height="2"/><rect x="5.800" y="13.500" width="2.300" height="2"/></g><rect x="9.100" y="10.500" width="2.400" height="5" fill="#1d4a8f"/></svg>
  <!-- chrome -->
  <svg class="abs" style="left:481.500px;top:615.500px" width="17" height="17" viewBox="0 0 17 17"><circle cx="8.500" cy="8.500" r="8" fill="#fbc116"/><path d="M8.500 8.500L1.570 4.500A8 8 0 0 1 15.430 4.500z" fill="#e33b2e"/><path d="M8.500 8.500L1.570 4.500A8 8 0 0 0 8.500 16.500L12 10.500z" fill="#2da94f"/><path d="M15.430 4.500H8.500v4l3.500 2-3.500 6A8 8 0 0 0 15.430 4.500z" fill="#fbc116"/><circle cx="8.500" cy="8.500" r="3.700" fill="#fff"/><circle cx="8.500" cy="8.500" r="2.900" fill="#4285f4"/></svg><div class="abs" style="left:488.5px;top:635px;width:3px;height:1.500px;border-radius:1px;background:#8a8a8a"></div>
  <!-- excel -->
  <svg class="abs" style="left:510px;top:616px" width="16" height="16" viewBox="0 0 16 16"><defs><linearGradient id="gx" x1="0" y1="0" x2=".6" y2="1"><stop offset="0" stop-color="#7fdc6a"/><stop offset=".55" stop-color="#2fae58"/><stop offset="1" stop-color="#0d6e36"/></linearGradient></defs><rect x="3.300" y=".8" width="11.500" height="14.200" rx="2.600" fill="url(#gx)"/><rect x="9" y="5.500" width="5.800" height="9.500" rx="1.500" fill="#0d6e36" opacity=".55"/><rect x=".5" y="7.700" width="6.600" height="6.600" rx="1.500" fill="#0f7a3e"/><path d="M2.400 9.400l2.800 3.200M5.200 9.400l-2.800 3.200" stroke="#fff" stroke-width="1" stroke-linecap="round"/></svg><div class="abs" style="left:517.0px;top:635px;width:3px;height:1.500px;border-radius:1px;background:#8a8a8a"></div>
  <!-- word -->
  <svg class="abs" style="left:539.5px;top:616px" width="16" height="16" viewBox="0 0 16 16"><defs><linearGradient id="gw" x1="0" y1="0" x2=".6" y2="1"><stop offset="0" stop-color="#5fd0f5"/><stop offset=".55" stop-color="#2f86ee"/><stop offset="1" stop-color="#1443c0"/></linearGradient></defs><rect x="3.300" y=".8" width="11.500" height="14.200" rx="2.600" fill="url(#gw)"/><rect x="9" y="5.500" width="5.800" height="9.500" rx="1.500" fill="#1443c0" opacity=".55"/><rect x=".5" y="7.700" width="6.600" height="6.600" rx="1.500" fill="#1a4fc4"/><path d="M1.900 9.500l.9 3 1-2.600 1 2.600.9-3" stroke="#fff" stroke-width=".85" fill="none" stroke-linecap="round" stroke-linejoin="round"/></svg><div class="abs" style="left:546.5px;top:635px;width:3px;height:1.500px;border-radius:1px;background:#8a8a8a"></div>
  <!-- acrobat -->
  <svg class="abs" style="left:570px;top:616px" width="16" height="16" viewBox="0 0 16 16"><rect x=".3" y=".3" width="15.400" height="15.400" rx="2.300" fill="#b30b00"/><path d="M3 12.300c1.600-1.400 3.600-4.600 4.300-7.800.2-1.100 1.300-1.100 1.300 0 0 2.200 1.800 4.800 4.300 5.600.9.300.7 1.200-.3 1.100-2.700-.3-6.300.4-8.800 1.900-.8.500-1.400-.2-.8-.8z" fill="none" stroke="#fff" stroke-width="1"/></svg><div class="abs" style="left:576.5px;top:635px;width:3px;height:1.500px;border-radius:1px;background:#8a8a8a"></div>
  <!-- powerpoint -->
  <svg class="abs" style="left:598.500px;top:615.500px" width="17" height="17" viewBox="0 0 17 17"><defs><linearGradient id="gp" x1="0" y1="0" x2="1" y2="1"><stop offset="0" stop-color="#f0506a"/><stop offset=".5" stop-color="#f0603e"/><stop offset="1" stop-color="#ff9a5a"/></linearGradient></defs><circle cx="9.300" cy="8.300" r="7.600" fill="url(#gp)"/><path d="M9.300 .7a7.600 7.600 0 0 1 7.600 7.600H9.300z" fill="#ffa25a" opacity=".85"/><path d="M9.300 8.300l6.500 4a7.600 7.600 0 0 1-10 2.500z" fill="#f5707a" opacity=".7"/><rect x=".5" y="8.500" width="6.600" height="6.600" rx="1.500" fill="#c8283a"/><path d="M2.900 13.400v-3.300h1.300a1.050 1.050 0 0 1 0 2.100H2.900" stroke="#fff" stroke-width=".9" fill="none" stroke-linecap="round" stroke-linejoin="round"/></svg><div class="abs" style="left:605.5px;top:635px;width:3px;height:1.500px;border-radius:1px;background:#8a8a8a"></div>
  <!-- onenote -->
  <svg class="abs" style="left:628px;top:616px" width="16" height="16" viewBox="0 0 16 16"><defs><linearGradient id="gn" x1="0" y1="0" x2=".6" y2="1"><stop offset="0" stop-color="#f08af5"/><stop offset=".55" stop-color="#c050e0"/><stop offset="1" stop-color="#8a1fc0"/></linearGradient></defs><rect x="3.300" y=".8" width="11.500" height="14.200" rx="2.600" fill="url(#gn)"/><rect x="9" y="5.500" width="5.800" height="9.500" rx="1.500" fill="#8a1fc0" opacity=".55"/><rect x=".5" y="7.700" width="6.600" height="6.600" rx="1.500" fill="#7a1fb0"/><path d="M2.500 12.700V9.400l2.600 3.300V9.400" stroke="#fff" stroke-width=".9" fill="none" stroke-linecap="round" stroke-linejoin="round"/></svg>
  <!-- snipping -->
  <svg class="abs" style="left:656px;top:614px" width="20" height="20" viewBox="0 0 20 20"><rect x="1" y="1" width="11.500" height="11.500" rx="2" fill="#f9f9f9"/><rect x="2.500" y="2.500" width="8.500" height="8.500" rx="1" fill="none" stroke="#e0452c" stroke-width="1.300" stroke-dasharray="2 1.300"/><path d="M9 9l5.500 4M9.500 13.500l5.500-5" stroke="#8a8f98" stroke-width="1.200"/><circle cx="16" cy="14" r="1.700" fill="none" stroke="#2b9be0" stroke-width="1.200"/><circle cx="11.500" cy="17" r="1.700" fill="none" stroke="#2b9be0" stroke-width="1.200"/></svg>
  <!-- edge -->
  <svg class="abs" style="left:686px;top:615px" width="18" height="18" viewBox="0 0 18 18"><defs><linearGradient id="eg" x1="0" y1="0" x2="1" y2="1"><stop offset="0" stop-color="#35c1f1"/><stop offset=".5" stop-color="#1a8fdd"/><stop offset="1" stop-color="#0c59a4"/></linearGradient><linearGradient id="eg2" x1="0" y1="0" x2="1" y2="0"><stop offset="0" stop-color="#2fc06a"/><stop offset="1" stop-color="#7bdc4a"/></linearGradient></defs><circle cx="9" cy="9" r="8.300" fill="url(#eg)"/><path d="M.8 8.500C1.200 4 4.800.7 9 .7c4.600 0 8.200 3.300 8.300 7.300 0 2.500-1.800 4-4 4-1.500 0-2.300-.6-2.300-1.200 0-.5.700-.8.700-2 0-1.600-1.500-3.200-4-3.200C4.500 5.600 1.800 7.500.8 8.500z" fill="url(#eg2)"/><circle cx="9.500" cy="9.500" r="2.500" fill="#e9f4fb" opacity=".0"/><rect x="2" y="10" width="9" height="7" rx="1" fill="#b2561a"/><rect x="2" y="12.300" width="9" height="1.300" fill="#f0a23a"/><rect x="5" y="9" width="3" height="1.500" fill="#7a3a10"/></svg>
  <!-- teams -->
  <svg class="abs" style="left:715px;top:615px" width="20" height="19" viewBox="0 0 20 19"><circle cx="13.500" cy="5" r="2.300" fill="#7b83eb"/><circle cx="7.800" cy="4.300" r="3" fill="#5b5fc7"/><rect x="10.500" y="7.800" width="7" height="8" rx="2.300" fill="#7b83eb"/><rect x="2.800" y="7.800" width="10.500" height="10" rx="2.600" fill="#5b5fc7"/><rect x="1" y="8.500" width="8" height="8" rx="1.200" fill="#4b53bc"/><path d="M3 10.400h4v1.100H5.600v3.700H4.400v-3.700H3z" fill="#fff"/></svg>
  <div class="abs" style="left:725.500px;top:612px;width:11px;height:11px;border-radius:50%;background:#d9382f;color:#fff;font-size:8px;line-height:11px;text-align:center">2</div><div class="abs" style="left:723.0px;top:635px;width:3px;height:1.500px;border-radius:1px;background:#8a8a8a"></div>
  <!-- tray -->
  <svg class="abs" style="left:784px;top:620.500px" width="9" height="7" viewBox="0 0 9 7" fill="none" stroke="#2a2a2a" stroke-width="1.100" stroke-linecap="round" stroke-linejoin="round"><path d="M1 5.500L4.500 2 8 5.500"/></svg>
  <svg class="abs" style="left:802px;top:617.500px" width="15" height="14" viewBox="0 0 15 14" fill="none" stroke="#3a3a3a" stroke-width="1.100" stroke-linecap="round"><path d="M2.500 5.500A5 5 0 0 1 11 3.500M11.500 8.500A5 5 0 0 1 3 10.500M11.300 1v2.700H8.600M2.700 13v-2.700h2.700"/><circle cx="11" cy="10.500" r="2.600" fill="#e8212b" stroke="none"/></svg>
  <svg class="abs" style="left:825px;top:620px" width="12" height="8" viewBox="0 0 15 10"><path d="M4 9.500a3.200 3.200 0 0 1-.5-6.400A4.300 4.300 0 0 1 11.600 4 2.800 2.800 0 0 1 11.800 9.500z" fill="#1a73d9"/><path d="M6 9.500L3.500 3.200C5 1 8.500.5 10.500 2.500L14 7.500c0 1-.8 2-2.200 2z" fill="#3f9cf0" opacity=".75"/></svg>
  <div class="abs" style="left:842px;top:611px;width:20.500px;height:26px;border-radius:3px;background:#0f6cbd"></div>
  <svg class="abs" style="left:848px;top:618.500px" width="8.800" height="11.200" viewBox="0 0 11 14"><rect x="3.300" y=".8" width="4.400" height="7.500" rx="2.200" fill="#fff"/><path d="M1.300 6.500a4.200 4.200 0 0 0 8.400 0M5.500 10.700v2.300" fill="none" stroke="#fff" stroke-width="1" stroke-linecap="round"/></svg>
  <svg class="abs" style="left:867px;top:618px" width="13" height="12" viewBox="0 0 13 12" fill="none" stroke="#1f5fae" stroke-width="1"><rect x="1" y="3" width="10.500" height="8" rx="1"/><path d="M3 9h6.500" /><path d="M2.500 .3v2.400M1.300 1.500h2.400M6.800 4.300v2.400M5.600 5.500H8" stroke-width=".9"/></svg>
  <div class="abs" id="ces" style="left:893px;top:618.500px;font-size:9px;color:#3a3a3a;line-height:11px;transform:scaleX(.8);transform-origin:0 0">CES</div>
  <svg class="abs" style="left:918.500px;top:619.500px" width="11.500" height="9" viewBox="0 0 14 11" fill="none" stroke="#3a3a3a" stroke-width="1.200" stroke-linecap="round"><path d="M1 4a8.500 8.500 0 0 1 12 0M3 6.300a5.600 5.600 0 0 1 8 0M5 8.500a2.800 2.800 0 0 1 4 0"/><circle cx="7" cy="9.800" r=".5" fill="#2a2a2a"/></svg>
  <svg class="abs" style="left:934.500px;top:618.500px" width="13" height="11" viewBox="0 0 13 11" fill="none" stroke="#2a2a2a" stroke-width="1" stroke-linecap="round" stroke-linejoin="round"><path d="M1 4h2l3-2.800v8.600L3 7H1z"/><path d="M8 3.800a2.500 2.500 0 0 1 0 3.400M9.700 2.200a4.800 4.800 0 0 1 0 6.600M11.300 .8a7 7 0 0 1 0 9.400" stroke-width=".9"/></svg>
  <svg class="abs" style="left:950.500px;top:619.500px" width="12.500" height="9" viewBox="0 0 14 10"><rect x="1" y="2" width="10.500" height="6.500" rx="1.300" fill="#2a2a2a"/><rect x="11.800" y="3.800" width="1.300" height="3" rx=".5" fill="#2a2a2a"/><path d="M2.500 .5l2 2.500M1 2.500h3" stroke="#2a2a2a" stroke-width="1"/></svg>
  <div class="abs" id="tm" style="left:950px;top:613px;width:61px;text-align:right;font-size:8.500px;color:#3c3c3c;line-height:10px;letter-spacing:-.2px">9:58</div>
  <div class="abs" id="dt" style="left:950px;top:624px;width:61px;text-align:right;font-size:8.500px;color:#3c3c3c;line-height:10px;letter-spacing:-.35px">29.01.2026</div>
</div>

</div>
</body>
</html>
